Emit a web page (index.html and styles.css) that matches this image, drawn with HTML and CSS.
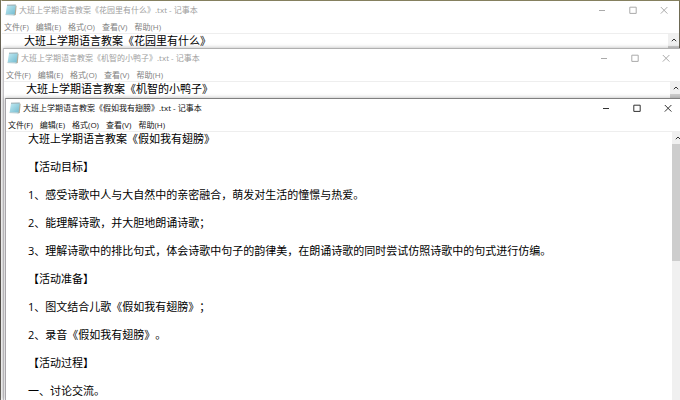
FILE: index.html
```
<!DOCTYPE html>
<html lang="zh-CN">
<head>
    <meta charset="UTF-8">
    <meta name="viewport" content="width=device-width, initial-scale=1.0">
    <title>记事本</title>
    <link rel="stylesheet" href="styles.css">
</head>
<body>
    <!-- 共用图标 -->
    <svg class="defs" aria-hidden="true">
        <defs>
            <linearGradient id="page" x1="0" y1="0" x2="1" y2="1">
                <stop offset="0" stop-color="#c4ecf4"/>
                <stop offset="1" stop-color="#6fb9ce"/>
            </linearGradient>
            <symbol id="notepad" viewBox="0 0 12 12">
                <path d="M9.6 1.4 11.6 1.8 10.8 11 8.6 11.4z" fill="#b5a893"/>
                <path d="M2 1.2 10.8 1 9.6 10.8 .6 10.4z" fill="url(#page)"/>
                <path d="M2 1.2 10.8 1" stroke="#95a8ad" stroke-width="1"/>
                <path d="M.6 10.6 9.4 11" stroke="#b4cdd3" stroke-width="1"/>
            </symbol>
            <symbol id="min" viewBox="0 0 8 8"><path d="M1 4.5h6"/></symbol>
            <symbol id="max" viewBox="0 0 8 8"><path d="M.8 1.2h6.4v6.2H.8z"/></symbol>
            <symbol id="close" viewBox="0 0 8 8"><path d="M.8 1 7.4 7.6M7.4 1 .8 7.6"/></symbol>
            <symbol id="up" viewBox="0 0 6 6"><path d="M.8 4.2 3 2l2.2 2.2"/></symbol>
        </defs>
    </svg>

    <section class="window window-back">
        <header class="title-bar">
            <svg class="app-icon"><use href="#notepad"/></svg>
            <h1 class="title">大班上学期语言教案《花园里有什么》.txt - 记事本</h1>
            <button class="caption-button" aria-label="最小化"><svg><use href="#min"/></svg></button>
            <button class="caption-button" aria-label="最大化"><svg><use href="#max"/></svg></button>
            <button class="caption-button" aria-label="关闭"><svg><use href="#close"/></svg></button>
        </header>
        <nav class="menu-bar">
            <button>文件(F)</button>
            <button>编辑(E)</button>
            <button>格式(O)</button>
            <button>查看(V)</button>
            <button>帮助(H)</button>
        </nav>
        <div class="content">
            <textarea class="editor" aria-label="文本编辑器" spellcheck="false">大班上学期语言教案《花园里有什么》</textarea>
            <div class="scrollbar">
                <button class="scroll-up" aria-label="向上滚动"><svg><use href="#up"/></svg></button>
                <div class="thumb"></div>
            </div>
        </div>
    </section>

    <section class="window window-middle">
        <header class="title-bar">
            <svg class="app-icon"><use href="#notepad"/></svg>
            <h1 class="title">大班上学期语言教案《机智的小鸭子》.txt - 记事本</h1>
            <button class="caption-button" aria-label="最小化"><svg><use href="#min"/></svg></button>
            <button class="caption-button" aria-label="最大化"><svg><use href="#max"/></svg></button>
            <button class="caption-button" aria-label="关闭"><svg><use href="#close"/></svg></button>
        </header>
        <nav class="menu-bar">
            <button>文件(F)</button>
            <button>编辑(E)</button>
            <button>格式(O)</button>
            <button>查看(V)</button>
            <button>帮助(H)</button>
        </nav>
        <div class="content">
            <textarea class="editor" aria-label="文本编辑器" spellcheck="false">大班上学期语言教案《机智的小鸭子》</textarea>
            <div class="scrollbar">
                <button class="scroll-up" aria-label="向上滚动"><svg><use href="#up"/></svg></button>
                <div class="thumb"></div>
            </div>
        </div>
    </section>

    <section class="window window-front">
        <header class="title-bar">
            <svg class="app-icon"><use href="#notepad"/></svg>
            <h1 class="title">大班上学期语言教案《假如我有翅膀》.txt - 记事本</h1>
            <button class="caption-button" aria-label="最小化"><svg><use href="#min"/></svg></button>
            <button class="caption-button" aria-label="最大化"><svg><use href="#max"/></svg></button>
            <button class="caption-button" aria-label="关闭"><svg><use href="#close"/></svg></button>
        </header>
        <nav class="menu-bar">
            <button>文件(F)</button>
            <button>编辑(E)</button>
            <button>格式(O)</button>
            <button>查看(V)</button>
            <button>帮助(H)</button>
        </nav>
        <div class="content">
            <textarea class="editor" aria-label="文本编辑器" spellcheck="false">大班上学期语言教案《假如我有翅膀》

【活动目标】

1、感受诗歌中人与大自然中的亲密融合，萌发对生活的憧憬与热爱。

2、能理解诗歌，并大胆地朗诵诗歌；

3、理解诗歌中的排比句式，体会诗歌中句子的韵律美，在朗诵诗歌的同时尝试仿照诗歌中的句式进行仿编。

【活动准备】

1、图文结合儿歌《假如我有翅膀》；

2、录音《假如我有翅膀》。

【活动过程】

一、讨论交流。</textarea>
            <div class="scrollbar">
                <button class="scroll-up" aria-label="向上滚动"><svg><use href="#up"/></svg></button>
                <div class="thumb"></div>
            </div>
        </div>
    </section>
</body>
</html>
```
FILE: styles.css
```
* {
    box-sizing: border-box;
}

body {
    margin: 0;
    height: 100vh;
    position: relative;
    overflow: hidden;
    font-family: "Open Sans", "Noto Sans CJK SC", sans-serif;
    text-spacing-trim: space-all; /* 标点保持全角宽度 */
    background: linear-gradient(#85805f, #67615f 20%, #827b78 50%, #5d5852 75%, #77726a);
}

button {
    padding: 0;
    border: none;
    background: none;
    font: inherit;
    color: inherit;
}

.defs {
    position: absolute;
    width: 0;
    height: 0;
}

/* 层叠的窗口 */
.window {
    position: absolute;
    bottom: 0;
    display: flex;
    flex-direction: column;
    background-color: #fff;
    color: #808080;
    border-top: 1px solid #b0b0b0;
    border-left: 1px solid #c4c2c6;
    box-shadow: 0 0 4px rgba(0, 0, 0, 0.3);
}

.window-back {
    top: 0;
    left: 1px;
    right: 1px;
    border-top-color: #85805f;
    border-left-color: #fff;
}

.window-middle {
    top: 48px;
    left: 3px;
    right: -1px;
}

.window-front {
    top: 98px;
    left: 5px;
    right: -3px;
    color: #111;
    border-top-color: #808080;
    border-left-color: #a8a5aa;
}

.title-bar {
    display: flex;
    align-items: center;
    height: 18px;
    padding-left: 3px;
}

.app-icon {
    width: 12px;
    height: 12px;
    margin-right: 2px;
}

.title {
    flex: 1;
    margin: 0;
    font-size: 8px;
    font-weight: normal;
    line-height: 18px;
    white-space: nowrap;
}

.window-back .title,
.window-middle .title {
    color: #a0a0a0;
}

.caption-button {
    display: flex;
    justify-content: center;
    align-items: center;
    width: 31px;
    height: 18px;
    color: #aaa;
}

.window-front .caption-button {
    color: #333;
}

.caption-button svg {
    width: 8px;
    height: 8px;
    fill: none;
    stroke: currentColor;
    stroke-width: 1;
}

.menu-bar {
    display: flex;
    gap: 7px;
    height: 15px;
    padding-left: 2px;
    border-bottom: 1px solid #eee;
    font-size: 8px;
    line-height: 16px;
}

.content {
    flex: 1;
    display: flex;
    min-height: 0;
}

.editor {
    flex: 1;
    padding: 0 0 0 22px;
    border: none;
    outline: none;
    resize: none;
    overflow: hidden;
    white-space: pre;
    font-family: inherit;
    font-size: 11px;
    line-height: 14px;
    text-spacing-trim: inherit;
    color: #000;
    background: none;
}

.scrollbar {
    width: 11px;
    background-color: #f0f0f0;
}

.scroll-up {
    display: flex;
    justify-content: center;
    align-items: center;
    width: 11px;
    height: 12px;
}

.scroll-up svg {
    width: 6px;
    height: 6px;
    fill: none;
    stroke: #333;
    stroke-width: 1;
}

.thumb {
    height: 117px;
    background-color: #cdcdcd;
}
```
